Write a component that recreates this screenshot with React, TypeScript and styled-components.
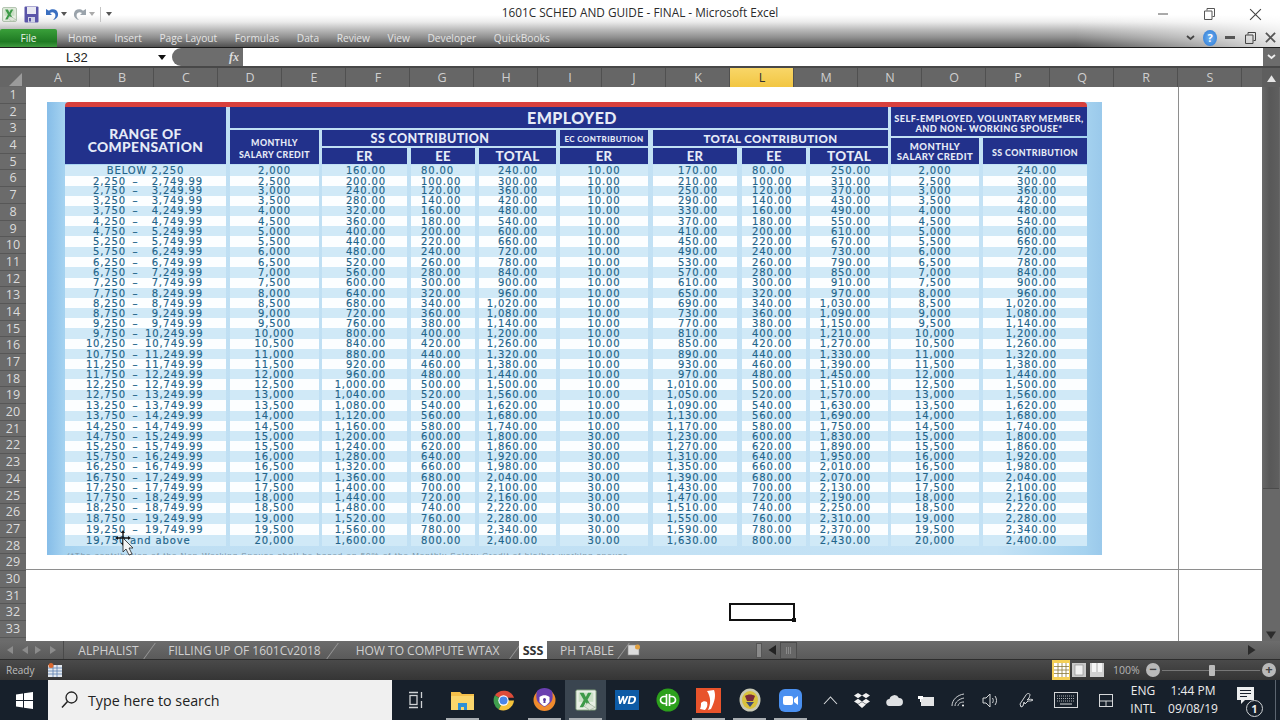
import React from "react";
import styled, { createGlobalStyle } from "styled-components";

const UI_FONT = `"Open Sans", "Noto Sans", sans-serif`;
const COLUMNS = ["A","B","C","D","E","F","G","H","I","J","K","L","M","N","O","P","Q","R","S"];
const RIBBON_TABS = ["Home","Insert","Page Layout","Formulas","Data","Review","View","Developer","QuickBooks"];
const SHEETS = [
  { name: "ALPHALIST", width: 89 },
  { name: "FILLING UP OF 1601Cv2018", width: 183 },
  { name: "HOW TO COMPUTE WTAX", width: 183 },
  { name: "SSS", width: 28, active: true },
  { name: "PH TABLE", width: 80 },
];

// text centres of the table rows as they sit in the scanned picture
const ROW_CENTERS = [171,181,191,200,211,221,231,241,252,262,272,283,293,303,313,323,333,344,354,364,374,384,395,405,416,426,436,446,456,467,477,487,497,508,518,529,540];

const money = (n: number) =>
  n.toLocaleString("en-US", { minimumFractionDigits: 2, maximumFractionDigits: 2 });
const whole = (n: number) => n.toLocaleString("en-US");

const TABLE = ROW_CENTERS.map((center, i) => {
  const prev = i === 0 ? 165 : (ROW_CENTERS[i - 1] + center) / 2;
  const next = i === ROW_CENTERS.length - 1 ? 546 : (ROW_CENTERS[i + 1] + center) / 2;
  const msc = 2000 + 500 * i;
  const er = 160 + 40 * i;
  const ee = er / 2;
  const ec = msc >= 15000 ? 30 : 10;
  const low = 2250 + 500 * (i - 1);
  return { i, height: next - prev, msc, er, ee, ec, low, high: low + 499.99 };
});

const GlobalStyle = createGlobalStyle`
  html, body { margin: 0; padding: 0; background: #16202b; }
  * { box-sizing: border-box; }
`;

const Screen = styled.div`
  width: 1280px;
  height: 720px;
  overflow: hidden;
  display: flex;
  flex-direction: column;
  font-family: ${UI_FONT};
`;

const Top = styled.div`
  height: 48px;
  flex: none;
  border-bottom: 1px solid #1c1c1c;
  background:
    linear-gradient(to right, rgba(255,255,255,0) 84%, rgba(255,255,255,.82) 100%),
    linear-gradient(to bottom, #fff 0, #fff 15px, #ebebeb 22px, #b8b8b8 30px, #8c8c8c 38px, #505050 47px);
`;

const TitleBar = styled.div`
  height: 28px;
  display: flex;
  align-items: center;
  padding-left: 1px;
  position: relative;
`;

const QuickIcon = styled.span<{ $w: number }>`
  width: ${(p) => p.$w}px;
  display: flex;
  justify-content: center;
  align-items: center;
  flex: none;
`;

const QuickSep = styled.span`
  width: 1px;
  height: 15px;
  margin: 0 3px;
  background: #c4c4c4;
  flex: none;
`;

const Title = styled.div`
  position: absolute;
  left: 0;
  right: 0;
  top: 4px;
  text-align: center;
  font-size: 11.8px;
  line-height: 17px;
  color: #2a2a2a;
`;

const WindowButtons = styled.div`
  margin-left: auto;
  display: flex;
  align-items: center;
  padding-right: 2px;
  position: relative;
`;

const WindowButton = styled.span`
  width: 46px;
  display: flex;
  justify-content: center;
`;

const RibbonTabs = styled.div`
  height: 19px;
  display: flex;
  align-items: center;
  position: relative;
`;

const FileTab = styled.div`
  width: 57px;
  height: 18px;
  margin: 1px 11px 0 0;
  background: linear-gradient(#3aa03a, #1f7a23 70%, #3f9a3f);
  color: #e8f3e8;
  font-size: 10.2px;
  display: flex;
  align-items: center;
  justify-content: center;
  border-radius: 2px 2px 0 0;
`;

const RibbonTab = styled.span`
  font-size: 10.2px;
  color: #e4e4e4;
  margin-right: 17.6px;
  white-space: nowrap;
`;

const RibbonButtons = styled.div`
  margin-left: auto;
  display: flex;
  align-items: center;
`;

const RibbonButton = styled.span`
  width: 20px;
  display: flex;
  justify-content: center;
`;

const HelpBadge = styled.span`
  width: 14px;
  height: 16px;
  border-radius: 50%;
  background: radial-gradient(#6fb1f0, #2a77d4);
  color: #fff;
  font-size: 11px;
  font-weight: 700;
  line-height: 16px;
  text-align: center;
`;

const FormulaBar = styled.div`
  height: 18px;
  flex: none;
  background: #fff;
  display: flex;
  align-items: stretch;
`;

const NameBox = styled.div`
  width: 172px;
  display: flex;
  align-items: center;
  position: relative;
  padding-left: 66px;
  font-family: "Liberation Sans", sans-serif;
  font-size: 13px;
  color: #222;
`;

const NameArrow = styled.span`
  position: absolute;
  left: 158px;
  top: 7px;
  border: 4px solid transparent;
  border-top: 5px solid #111;
  border-bottom: 0;
`;

const FxPill = styled.div`
  width: 71px;
  background: #6d6d6d;
  border-radius: 9px 0 0 9px;
  display: flex;
  align-items: center;
  justify-content: flex-end;
  padding-right: 4px;
  color: #ddd;
  font-family: "Liberation Serif", serif;
  font-style: italic;
  font-weight: 700;
  font-size: 12px;
`;

const FormulaInput = styled.div`
  flex: 1;
`;

const FormulaExpand = styled.div`
  width: 17px;
  background: #6c6c6c;
  color: #eee;
  display: flex;
  align-items: center;
  justify-content: center;
`;

const ColumnBar = styled.div`
  height: 21px;
  flex: none;
  display: flex;
  background: #666;
  border-top: 2px solid #484848;
`;

const Corner = styled.div`
  width: 26px;
  flex: none;
  display: flex;
  align-items: flex-end;
  justify-content: flex-end;
  padding: 0 4px 1px 0;
`;

const ColumnHead = styled.div<{ $on?: boolean }>`
  width: 64px;
  flex: none;
  padding-left: 1px;
  text-align: center;
  font-size: 12.5px;
  line-height: 19px;
  color: ${(p) => (p.$on ? "#333" : "#cfcfcf")};
  background: ${(p) => (p.$on ? "linear-gradient(#f8d668, #f2c642)" : "none")};
  border-right: 1px solid #505050;
`;

const ColumnRest = styled.div`
  flex: 1;
`;

const ArrowCell = styled.div`
  width: 18px;
  flex: none;
  display: flex;
  align-items: center;
  justify-content: center;
  background: #5e5e5e;
`;

const Body = styled.div`
  flex: 1;
  min-height: 0;
  display: flex;
`;

const RowHeads = styled.div`
  width: 26px;
  flex: none;
  background: #6b6b6b;
  overflow: hidden;
`;

const RowHead = styled.div`
  height: 16.69px;
  line-height: 16px;
  text-align: center;
  font-size: 12.5px;
  color: #dcdcdc;
  border-bottom: 1px solid #575757;
`;

const Sheet = styled.div`
  flex: 1;
  position: relative;
  background: #fff;
  overflow: hidden;
`;

const PageLineV = styled.div`
  position: absolute;
  left: 1152px;
  top: 0;
  bottom: 0;
  width: 1px;
  background: #8e8e8e;
`;

const PageLineH = styled.div`
  position: absolute;
  left: 0;
  right: 0;
  top: 482px;
  height: 1px;
  background: #8e8e8e;
`;

const SelectedCell = styled.div`
  position: absolute;
  left: 703px;
  top: 516px;
  width: 66px;
  height: 18px;
  border: 2px solid #111;
  &::after {
    content: "";
    position: absolute;
    right: -3px;
    bottom: -3px;
    width: 4px;
    height: 4px;
    background: #111;
  }
`;

const Picture = styled.div`
  position: absolute;
  left: 21px;
  top: 15px;
  width: 1055px;
  height: 453px;
  padding-left: 18px;
  overflow: hidden;
  background: linear-gradient(to right, #86bde8 0, #a4d2f0 1.6%, #bfdff3 8%, #c4e2f5 90%, #a5d2ef 98.4%, #9ac9eb 100%);
`;

const RedStrip = styled.div`
  width: 1022px;
  height: 5px;
  background: #d8403c;
  border-radius: 4px 4px 0 0;
`;

const HeadRow = styled.div`
  display: flex;
  width: 1022px;
  height: 57px;
  margin-bottom: 1px;
`;

const Navy = styled.div<{ $w?: number; $h?: number; $mr?: number; $size?: number; $pt?: number; $pl?: number; $pr?: number; $lh?: number }>`
  ${(p) => (p.$w ? `width: ${p.$w}px;` : "")}
  ${(p) => (p.$h ? `height: ${p.$h}px;` : "")}
  margin-right: ${(p) => p.$mr ?? 0}px;
  padding: ${(p) => p.$pt ?? 1}px ${(p) => p.$pr ?? 0}px 0 ${(p) => p.$pl ?? 0}px;
  flex: none;
  background: #22318b;
  color: #e6ebf7;
  font-family: Lato, sans-serif;
  font-weight: 900;
  font-size: ${(p) => p.$size ?? 12}px;
  line-height: ${(p) => p.$lh ?? 1.02};
  letter-spacing: 0.4px;
  text-align: center;
  display: flex;
  align-items: center;
  justify-content: center;
  white-space: pre-line;
`;

const HeadGroup = styled.div<{ $w: number; $mr?: number }>`
  width: ${(p) => p.$w}px;
  margin-right: ${(p) => p.$mr ?? 0}px;
  flex: none;
  display: flex;
  flex-direction: column;
  justify-content: space-between;
`;

const HeadLine = styled.div`
  display: flex;
`;

const DataRow = styled.div<{ $h: number }>`
  display: flex;
  width: 1022px;
  height: ${(p) => p.$h}px;
  font-family: "DejaVu Sans", sans-serif;
  font-size: 10px;
  letter-spacing: 0.85px;
  color: #22648a;
  -webkit-text-stroke: 0.15px #22648a;
`;

const DataCell = styled.div<{ $w: number; $mr?: number; $align?: string; $pad?: number; $alt: boolean }>`
  width: ${(p) => p.$w}px;
  margin-right: ${(p) => p.$mr ?? 0}px;
  flex: none;
  display: flex;
  align-items: center;
  white-space: nowrap;
  justify-content: ${(p) => p.$align ?? "center"};
  ${(p) => (p.$align === "flex-end" ? `padding-right: ${p.$pad}px;` : "")}
  ${(p) => (p.$align === "flex-start" ? `padding-left: ${p.$pad}px;` : "")}
  background: ${(p) => (p.$alt ? "#fcfeff" : "#d0e9f7")};
`;

const RangeParts = styled.div`
  display: grid;
  grid-template-columns: 61px 19px 58px;
  width: 138px;
  margin-right: auto;
`;

const RangePart = styled.span<{ $center?: boolean }>`
  text-align: ${(p) => (p.$center ? "center" : "right")};
`;

const RangeWhole = styled.span`
  grid-column: 1 / -1;
  padding-left: 21px;
`;

const Footnote = styled.div`
  margin-top: 5px;
  width: 580px;
  padding-left: 2px;
  font-family: "Liberation Sans", sans-serif;
  font-size: 8px;
  line-height: 10px;
  letter-spacing: 1px;
  color: #7b95a6;
  white-space: nowrap;
  overflow: hidden;
`;

const Cursor = styled.svg`
  position: absolute;
  left: 84px;
  top: 442px;
`;

const ScrollColumn = styled.div`
  width: 18px;
  flex: none;
  display: flex;
  flex-direction: column;
  background: #686868;
`;

const ScrollThumb = styled.div`
  height: 402px;
  flex: none;
  margin: 0 1px;
  background: linear-gradient(to right, #666, #585858 40%, #5f5f5f);
  border-bottom: 1px solid #4b4b4b;
`;

const ScrollEnd = styled.div`
  margin-top: auto;
  height: 14px;
  display: flex;
  justify-content: center;
  align-items: center;
`;

const TabBar = styled.div`
  height: 19px;
  flex: none;
  display: flex;
  align-items: center;
  background: linear-gradient(#6c6c6c, #5a5a5a);
  border-bottom: 1px solid #2d2d2d;
  color: #d0d0d0;
`;

const TabNav = styled.div`
  width: 64px;
  flex: none;
  height: 100%;
  display: flex;
  align-items: center;
  justify-content: space-around;
  padding: 0 2px;
  border-right: 1px solid #4a4a4a;
`;

const SheetTab = styled.div<{ $w: number; $on?: boolean }>`
  width: ${(p) => p.$w}px;
  flex: none;
  height: 100%;
  position: relative;
  display: flex;
  align-items: center;
  justify-content: center;
  font-size: 12px;
  white-space: nowrap;
  ${(p) => (p.$on ? "background: #fff; color: #333; font-weight: 700; font-size: 12.5px;" : "")}
  ${(p) =>
    p.$on
      ? ""
      : `&::after {
    content: "";
    position: absolute;
    right: 3px;
    top: 2px;
    width: 1px;
    height: 16px;
    background: #9a9a9a;
    transform: skewX(-36deg);
  }`}
`;

const NewSheet = styled.span`
  display: flex;
`;

const HScroll = styled.div`
  margin-left: auto;
  width: 524px;
  flex: none;
  display: flex;
  align-items: center;
  height: 100%;
`;

const Splitter = styled.span`
  width: 6px;
  height: 15px;
  background: #8a8a8a;
  border: 1px solid #555;
  flex: none;
`;

const ArrowBox = styled.span`
  width: 18px;
  display: flex;
  justify-content: center;
  flex: none;
`;

const HThumb = styled.span`
  width: 17px;
  height: 17px;
  background: #666;
  border: 1px solid #4c4c4c;
  flex: none;
  display: flex;
  align-items: center;
  justify-content: center;
`;

const HTrack = styled.span`
  flex: 1;
`;

const StatusBar = styled.div`
  height: 20px;
  flex: none;
  display: flex;
  align-items: center;
  background: linear-gradient(#4a4a4a, #353535);
  color: #bdbdbd;
  font-size: 10px;
  padding-left: 6px;
`;

const StatusIcon = styled.span`
  margin-left: 14px;
  display: flex;
`;

const StatusRight = styled.div`
  margin-left: auto;
  display: flex;
  align-items: center;
  height: 100%;
  padding-right: 4px;
`;

const ViewButton = styled.span<{ $on?: boolean; $w: number }>`
  width: ${(p) => p.$w}px;
  height: 100%;
  display: flex;
  align-items: center;
  justify-content: center;
  ${(p) => (p.$on ? "background: #f4cf56;" : "")}
`;

const Zoom = styled.span`
  width: 40px;
  padding-left: 7px;
  font-size: 10.5px;
  color: #b5b5b5;
`;

const ZoomRound = styled.span`
  width: 14px;
  height: 14px;
  border-radius: 50%;
  background: #b9b9b9;
  color: #444;
  font-size: 13px;
  font-weight: 700;
  line-height: 13px;
  text-align: center;
  flex: none;
`;

const ZoomTrack = styled.span`
  width: 98px;
  height: 1px;
  margin: 0 2px;
  background: #777;
  position: relative;
  flex: none;
  &::after {
    content: "";
    position: absolute;
    left: 47px;
    top: -5px;
    width: 6px;
    height: 11px;
    background: #bbb;
    border-radius: 1px;
  }
`;

const Taskbar = styled.div`
  height: 40px;
  flex: none;
  display: flex;
  align-items: center;
  background: #17202b;
  color: #ececec;
`;

const StartButton = styled.div`
  width: 48px;
  display: flex;
  justify-content: center;
  flex: none;
`;

const SearchBox = styled.div`
  width: 344px;
  height: 40px;
  flex: none;
  background: #f0f0f0;
  display: flex;
  align-items: center;
  padding-left: 13px;
  color: #222;
  font-size: 14.3px;
  gap: 10px;
`;

const AppSlot = styled.div<{ $w?: number; $on?: boolean; $run?: boolean }>`
  width: ${(p) => p.$w ?? 41}px;
  height: 40px;
  flex: none;
  display: flex;
  align-items: center;
  justify-content: center;
  position: relative;
  ${(p) => (p.$on ? "background: #3a4550;" : "")}
  ${(p) =>
    p.$run
      ? `&::after {
    content: "";
    position: absolute;
    left: 4px;
    right: 4px;
    bottom: 0;
    height: 2px;
    background: #a9aeb2;
  }`
      : ""}
`;

const TwoLine = styled.div<{ $w: number }>`
  width: ${(p) => p.$w}px;
  flex: none;
  text-align: center;
  font-size: 12px;
  line-height: 18px;
  white-space: nowrap;
`;

const DesktopEdge = styled.div`
  flex: 1;
  height: 100%;
  position: relative;
  &::after {
    content: "";
    position: absolute;
    left: 7px;
    top: 0;
    bottom: 0;
    width: 1px;
    background: #5c6570;
  }
`;

const NoteSvg = styled.svg`
  margin: 0 0 8px -3px;
`;

const NoteBadge = styled.span`
  position: absolute;
  left: 20px;
  top: 20px;
  width: 17px;
  height: 17px;
  border: 1px solid #cfd2d5;
  border-radius: 50%;
  background: #17202b;
  font-size: 11px;
  font-weight: 700;
  line-height: 15px;
  text-align: center;
`;

const UndoSvg = styled.svg<{ $flip?: boolean }>`
  ${(p) => (p.$flip ? "transform: scaleX(-1);" : "")}
`;

const ExcelIcon = ({ size = 15 }: { size?: number }) => (
  <svg width={size} height={size} viewBox="0 0 24 24">
    <rect x="1" y="1" width="22" height="22" rx="1.5" fill="#e8efe4" stroke="#7d9a78" />
    <path d="M4 4h16v10H4z" fill="#c9dfc4" />
    <path d="M5 4l4.5 8L5 20h4l2.8-5.6L14.5 20h4.2l-5-8.4L18 4h-3.8l-2.4 4.8L9.400 4z" fill="#3d9a48" />
    <path d="M14 15l8 5-6 3-6-4z" fill="#dfe6da" stroke="#8aa487" strokeWidth=".6" />
  </svg>
);

const SaveIcon = () => (
  <svg width="15" height="17" viewBox="0 0 15 17">
    <rect x="0.500" y="0.500" width="14" height="16" rx="1" fill="#5a55a8" />
    <rect x="3" y="1" width="9" height="7" fill="#e8e8f2" />
    <rect x="4" y="11" width="7" height="5.500" fill="#cfd2e6" />
    <rect x="5" y="12" width="2" height="3.500" fill="#5a55a8" />
  </svg>
);

const UndoIcon = ({ flip, color }: { flip?: boolean; color: string }) => (
  <UndoSvg $flip={flip} width="14" height="15" viewBox="0 0 14 15">
    <path d="M1 2v6h6L5 6c2-1.500 5-.8 5.400 2 .3 2-1 3.600-2.400 5 3-.8 5.500-3 5-6.500C12.500 2.500 7.500 1 4 3.800z" fill={color} />
  </UndoSvg>
);

const TinyDown = ({ color = "#777" }: { color?: string }) => (
  <svg width="6" height="4" viewBox="0 0 6 4"><path d="M0 0h6L3 4z" fill={color} /></svg>
);

const Triangle = ({ dir, color, size = 8 }: { dir: "up" | "down" | "left" | "right"; color: string; size?: number }) => {
  const d = { up: "M0 8L4 2l4 6z", down: "M0 2h8L4 8z", left: "M8 0v8L2 4z", right: "M0 0v8l6-4z" }[dir];
  return <svg width={size} height={size} viewBox="0 0 8 8"><path d={d} fill={color} /></svg>;
};

const CloseGlyph = ({ size = 13, color = "#444", w = 1 }: { size?: number; color?: string; w?: number }) => (
  <svg width={size} height={size} viewBox="0 0 12 12"><path d="M1 1l10 10M11 1L1 11" stroke={color} strokeWidth={w} fill="none" /></svg>
);

const RestoreGlyph = ({ color = "#444" }: { color?: string }) => (
  <svg width="11" height="12" viewBox="0 0 11 12">
    <path d="M3 2.500V.500h7.500v8H8.500M.500 3h7.500v8.500H.500z" fill="none" stroke={color} />
  </svg>
);

const WinLogo = () => (
  <svg width="17" height="17" viewBox="0 0 17 17">
    <path d="M0 2.400l7-1v6.600H0zM8 1.300L17 0v8H8zM0 9h7v6.600l-7-1zM8 9h9v8l-9-1.300z" fill="#fff" />
  </svg>
);

const SearchGlyph = () => (
  <svg width="17" height="18" viewBox="0 0 17 18">
    <circle cx="10.500" cy="6.500" r="5.500" fill="none" stroke="#222" strokeWidth="1.300" />
    <path d="M6.500 10.500L1 16.500" stroke="#222" strokeWidth="1.500" />
  </svg>
);

const TaskView = () => (
  <svg width="14" height="18" viewBox="0 0 14 18" fill="none" stroke="#cfd2d5" strokeWidth="1.300">
    <path d="M0 1.500h9M0 16.500h9" />
    <rect x="1" y="4.500" width="7" height="9" />
    <path d="M12.500 1v6M12.500 10v7" />
  </svg>
);

const FolderIcon = () => (
  <svg width="23" height="22" viewBox="0 0 23 22">
    <path d="M0 3h9l2 2h12v16H0z" fill="#f5c04a" />
    <path d="M0 7h23v14H0z" fill="#fbd66c" />
    <path d="M7 14h9v7h-3v-3h-3v3H7z" fill="#2d8fd6" />
  </svg>
);

const ChromeIcon = () => (
  <svg width="23" height="23" viewBox="0 0 24 24">
    <path d="M12 12L3 6.500A11.500 11.500 0 0 1 23 9H12z" fill="#dd4b39" />
    <path d="M12 12l-5 9.500A11.500 11.500 0 0 1 3 6.500z" fill="#3f9e4d" />
    <path d="M12 12h11a11.500 11.500 0 0 1-16 9.500z" fill="#f5c33b" />
    <circle cx="12" cy="12" r="5.400" fill="#fff" />
    <circle cx="12" cy="12" r="4.200" fill="#4a85e8" />
  </svg>
);

const ShieldIcon = () => (
  <svg width="23" height="24" viewBox="0 0 23 24">
    <circle cx="11.500" cy="12" r="11" fill="#ef8b2d" />
    <path d="M4 3c4-4 11-4 15 0 1 4 1 8-1 11-2 2-4 3.500-6.500 5-2.500-1.500-4.500-3-6.500-5-2-3-2-7-1-11z" fill="#6a3fb0" />
    <path d="M6.500 9c3-2.500 7-2.500 10 0v5c-1.500 2-3 3.200-5 4.200-2-1-3.500-2.200-5-4.200z" fill="#fff" />
    <circle cx="11.500" cy="11.500" r="1.500" fill="#5a3a9e" />
    <path d="M10.800 12h1.400l.4 3h-2.200z" fill="#5a3a9e" />
  </svg>
);

const WdIcon = () => (
  <svg width="24" height="20" viewBox="0 0 24 20">
    <rect width="24" height="20" fill="#0d5ba6" />
    <path d="M3 6h2l.3 5L7.500 6h1.600l.3 5L11.600 6h1.900L10 14H8.300l-.3-4.800L5.800 14H4.200z" fill="#fff" />
    <path d="M14.200 6h3.800c2.600 0 3.400 1.600 3 3.800-.4 2.600-2.100 4.200-4.900 4.200h-3.500zm1.500 1.600l-1 4.800h1.500c1.500 0 2.500-1 2.800-2.700.2-1.400-.2-2.100-1.500-2.100z" fill="#fff" />
  </svg>
);

const QbIcon = () => (
  <svg width="24" height="24" viewBox="0 0 24 24">
    <circle cx="12" cy="12" r="11.500" fill="#2ca01c" />
    <path d="M10.500 6v12M10.500 8.500H8a3.500 3.500 0 0 0 0 7h2.500M13.500 18V6M13.500 8.500H16a3.500 3.500 0 0 1 0 7h-2.500" fill="none" stroke="#fff" strokeWidth="1.700" />
  </svg>
);

const RedIcon = () => (
  <svg width="25" height="25" viewBox="0 0 25 25">
    <rect width="25" height="25" fill="#e8532b" />
    <path d="M11 3l7-1c2 5 1 11-3 19l-3 1c3-6 3-13-1-19z" fill="#fff" />
    <path d="M5 15c2-2 4-2 6-1 1 3 0 6-2 8-2 0-3-1-5-1 1-2 1-4 1-6z" fill="#fff" />
  </svg>
);

const SealIcon = () => (
  <svg width="22" height="24" viewBox="0 0 22 24">
    <ellipse cx="11" cy="12" rx="10.500" ry="11.500" fill="#c9c9b4" />
    <ellipse cx="11" cy="12" rx="8" ry="9" fill="#d9c23c" />
    <path d="M6 8c3-2 7-2 10 0l-2 5H8z" fill="#7a2a3a" />
    <path d="M7 14h8l-4 5z" fill="#3c4a7a" />
  </svg>
);

const ZoomIcon = () => (
  <svg width="23" height="23" viewBox="0 0 23 23">
    <rect width="23" height="23" rx="6" fill="#4a90f0" />
    <rect x="4" y="7" width="10" height="9" rx="2" fill="#fff" />
    <path d="M15 10l4-3v9l-4-3z" fill="#fff" />
  </svg>
);

const Tray = {
  chevron: <svg width="15" height="9" viewBox="0 0 15 9"><path d="M1 8l6.500-7L14 8" fill="none" stroke="#d8dadc" strokeWidth="1.100" /></svg>,
  dropbox: (
    <svg width="16" height="15" viewBox="0 0 16 15">
      <path d="M4 0l4 2.600L4 5.200 0 2.600zM12 0l4 2.600-4 2.600-4-2.600zM4 5.800l4 2.600-4 2.600-4-2.600zM12 5.800l4 2.600-4 2.600-4-2.600zM4 11.500l4-2.400 4 2.400L8 15z" fill="#f2f2f2" />
    </svg>
  ),
  cloud: <svg width="17" height="11" viewBox="0 0 17 11"><path d="M4 11a3.500 3.500 0 0 1-.5-7 5 5 0 0 1 9.400-1A4 4 0 0 1 13 11z" fill="#dfe1e3" /></svg>,
  plug: (
    <svg width="16" height="12" viewBox="0 0 16 12">
      <rect x="3" y="3" width="13" height="9" fill="#e3e4e5" />
      <path d="M1 0v2M4 0v2M0 2h5v3H3v3H2V5H0z" fill="#fff" />
    </svg>
  ),
  wifi: (
    <svg width="14" height="14" viewBox="0 0 14 14" fill="none" stroke="#cfd2d5" strokeWidth="1">
      <path d="M1 13C1 7 6 2 13 1M4 13c0-4 4-7 9-8M7 13c0-2 2-4 6-4" />
      <circle cx="12" cy="12.500" r="1" fill="#fff" stroke="none" />
    </svg>
  ),
  volume: (
    <svg width="17" height="15" viewBox="0 0 17 15" fill="none" stroke="#d5d7d9" strokeWidth="1">
      <path d="M1 5h3l4-4v13l-4-4H1zM10.500 5c1 1.500 1 3.500 0 5M13 3c2 2.500 2 6.500 0 9" />
    </svg>
  ),
  pen: (
    <svg width="15" height="17" viewBox="0 0 15 17" fill="none" stroke="#d5d7d9" strokeWidth="1">
      <path d="M2 15l-1-3 6-9c1-2 4-2 4 0 0 1-1 2-1 3l-2 2c2-1 5-1 6 0-1 1-3 1-5 1l-3 3-1-2-1 4z" />
    </svg>
  ),
  keyboard: (
    <svg width="24" height="16" viewBox="0 0 24 16">
      <rect x=".5" y=".5" width="23" height="15" fill="none" stroke="#d5d7d9" />
      <path d="M3 4h18M3 6.500h18M3 9h18" stroke="#aeb1b4" strokeDasharray="1 1" />
      <path d="M6 12h12" stroke="#d5d7d9" />
    </svg>
  ),
  tablet: (
    <svg width="14" height="13" viewBox="0 0 14 13" fill="none" stroke="#d5d7d9">
      <rect x=".5" y=".5" width="13" height="12" />
      <path d="M.5 7h13M7 7v5.500" />
    </svg>
  ),
  note: (
    <NoteSvg width="18" height="18" viewBox="0 0 18 18">
      <path d="M0 0h17v13H8l-4 4v-4H0z" fill="#eceeef" />
      <path d="M3 3.500h11M3 6.500h11M3 9.500h7" stroke="#17202b" />
    </NoteSvg>
  ),
};

const GridGlyph = () => (
  <svg width="15" height="14" viewBox="0 0 15 14">
    <rect width="15" height="14" fill="#fff" />
    <path d="M0 3.500h15M0 7h15M0 10.500h15M4 0v14M8 0v14M12 0v14" stroke="#8b7a3a" strokeWidth=".8" />
  </svg>
);

const PageGlyph = () => (
  <svg width="14" height="14" viewBox="0 0 14 14">
    <rect width="14" height="14" fill="#c9c9c9" />
    <rect x="3" y="2" width="8" height="10" fill="#f0f0f0" stroke="#888" strokeWidth=".6" />
  </svg>
);

const BreakGlyph = () => (
  <svg width="14" height="14" viewBox="0 0 14 14">
    <rect width="14" height="14" fill="#d0d0d0" />
    <path d="M2 0h4v9H2zM8 0h4v9H8z" fill="#f5f5f5" />
  </svg>
);

const TableHead = () => (
  <HeadRow>
    <Navy $w={161} $mr={4} $size={13.8} $pt={9} $lh={0.95}>{"RANGE OF\nCOMPENSATION"}</Navy>
    <HeadGroup $w={658} $mr={3}>
      <Navy $h={21} $size={16} $pl={26}>EMPLOYED</Navy>
      <HeadLine>
        <Navy $w={89} $h={34} $mr={3} $size={8.8} $pt={3} $lh={1.35}>{"MONTHLY\nSALARY CREDIT"}</Navy>
        <HeadGroup $w={234} $mr={4}>
          <Navy $h={16} $size={12.5} $pr={18} $pt={2}>SS CONTRIBUTION</Navy>
          <HeadLine>
            <Navy $w={85} $h={16} $mr={4} $size={13} $pt={2}>ER</Navy>
            <Navy $w={64} $h={16} $mr={4} $size={13} $pt={2}>EE</Navy>
            <Navy $w={77} $h={16} $size={13.5} $pt={2}>TOTAL</Navy>
          </HeadLine>
        </HeadGroup>
        <HeadGroup $w={88} $mr={5}>
          <Navy $h={16} $size={8} $pt={2}>EC CONTRIBUTION</Navy>
          <Navy $h={16} $size={13} $pt={2}>ER</Navy>
        </HeadGroup>
        <HeadGroup $w={235}>
          <Navy $h={16} $size={11.5} $pt={2}>TOTAL CONTRIBUTION</Navy>
          <HeadLine>
            <Navy $w={84} $h={16} $mr={5} $size={13} $pt={2}>ER</Navy>
            <Navy $w={64} $h={16} $mr={4} $size={13} $pt={2}>EE</Navy>
            <Navy $w={78} $h={16} $size={13.5} $pt={2}>TOTAL</Navy>
          </HeadLine>
        </HeadGroup>
      </HeadLine>
    </HeadGroup>
    <HeadGroup $w={196}>
      <Navy $h={29} $size={9.2} $pt={4}>{"SELF-EMPLOYED, VOLUNTARY MEMBER,\nAND NON- WORKING SPOUSE*"}</Navy>
      <HeadLine>
        <Navy $w={88} $h={26} $mr={4} $size={9.5} $pt={2}>{"MONTHLY\nSALARY CREDIT"}</Navy>
        <Navy $w={104} $h={26} $size={8.9} $pt={3}>SS CONTRIBUTION</Navy>
      </HeadLine>
    </HeadGroup>
  </HeadRow>
);

const TableBody = () => (
  <>
    {TABLE.map((r) => {
      const alt = r.i % 2 === 1;
      return (
        <DataRow key={r.i} $h={r.height}>
          <DataCell $w={161} $mr={4} $alt={alt}>
            {r.i === 0 ? (
              "BELOW 2,250"
            ) : r.i === 36 ? (
              <RangeParts>
                <RangeWhole>19,750 and above</RangeWhole>
              </RangeParts>
            ) : (
              <RangeParts>
                <RangePart>{whole(r.low)}</RangePart>
                <RangePart $center>–</RangePart>
                <RangePart>{money(r.high)}</RangePart>
              </RangeParts>
            )}
          </DataCell>
          <DataCell $w={89} $mr={3} $alt={alt}>{whole(r.msc)}</DataCell>
          <DataCell $w={85} $mr={4} $alt={alt} $align="flex-end" $pad={21}>{money(r.er)}</DataCell>
          <DataCell $w={64} $mr={4} $alt={alt} $align="flex-start" $pad={10}>{money(r.ee)}</DataCell>
          <DataCell $w={77} $mr={4} $alt={alt} $align="flex-end" $pad={18}>{money(r.er + r.ee)}</DataCell>
          <DataCell $w={88} $mr={5} $alt={alt}>{money(r.ec)}</DataCell>
          <DataCell $w={84} $mr={5} $alt={alt} $align="flex-end" $pad={19}>{money(r.er + r.ec)}</DataCell>
          <DataCell $w={64} $mr={4} $alt={alt} $align="flex-start" $pad={10}>{money(r.ee)}</DataCell>
          <DataCell $w={78} $mr={3} $alt={alt} $align="flex-end" $pad={17}>{money(r.er + r.ee + r.ec)}</DataCell>
          <DataCell $w={88} $mr={4} $alt={alt}>{whole(r.msc)}</DataCell>
          <DataCell $w={104} $alt={alt} $align="flex-end" $pad={30}>{money(r.er + r.ee)}</DataCell>
        </DataRow>
      );
    })}
  </>
);

export default function App() {
  return (
    <Screen>
      <GlobalStyle />
      <Top>
        <TitleBar>
          <QuickIcon $w={16}><ExcelIcon /></QuickIcon>
          <QuickIcon $w={6} />
          <QuickIcon $w={16}><SaveIcon /></QuickIcon>
          <QuickIcon $w={6} />
          <QuickIcon $w={14}><UndoIcon color="#3a6fc0" /></QuickIcon>
          <QuickIcon $w={10}><TinyDown color="#555" /></QuickIcon>
          <QuickIcon $w={4} />
          <QuickIcon $w={14}><UndoIcon flip color="#9aa3ab" /></QuickIcon>
          <QuickIcon $w={10}><TinyDown color="#aaa" /></QuickIcon>
          <QuickSep />
          <QuickIcon $w={9}><TinyDown color="#555" /></QuickIcon>
          <Title>1601C SCHED AND GUIDE - FINAL - Microsoft Excel</Title>
          <WindowButtons>
            <WindowButton><svg width="10" height="4" viewBox="0 0 10 4"><path d="M0 2h10" stroke="#555" /></svg></WindowButton>
            <WindowButton><RestoreGlyph color="#555" /></WindowButton>
            <WindowButton><CloseGlyph color="#444" /></WindowButton>
          </WindowButtons>
        </TitleBar>
        <RibbonTabs>
          <FileTab>File</FileTab>
          {RIBBON_TABS.map((t) => <RibbonTab key={t}>{t}</RibbonTab>)}
          <RibbonButtons>
            <RibbonButton><svg width="9" height="6" viewBox="0 0 9 6"><path d="M1 1l3.500 3L8 1" fill="none" stroke="#444" strokeWidth="1.800" /></svg></RibbonButton>
            <RibbonButton><HelpBadge>?</HelpBadge></RibbonButton>
            <RibbonButton><svg width="10" height="4" viewBox="0 0 10 4"><rect width="10" height="3" fill="#555" /></svg></RibbonButton>
            <RibbonButton><RestoreGlyph color="#444" /></RibbonButton>
            <RibbonButton><CloseGlyph size={11} color="#555" w={2} /></RibbonButton>
          </RibbonButtons>
        </RibbonTabs>
      </Top>
      <FormulaBar>
        <NameBox>L32<NameArrow /></NameBox>
        <FxPill>fx</FxPill>
        <FormulaInput />
        <FormulaExpand><svg width="9" height="6" viewBox="0 0 9 6"><path d="M1 1l3.500 3L8 1" fill="none" stroke="#eee" strokeWidth="1.800" /></svg></FormulaExpand>
      </FormulaBar>
      <ColumnBar>
        <Corner><svg width="13" height="13" viewBox="0 0 13 13"><path d="M13 0v13H0z" fill="#9b9b9b" /></svg></Corner>
        {COLUMNS.map((c) => <ColumnHead key={c} $on={c === "L"}>{c}</ColumnHead>)}
        <ColumnRest />
        <ArrowCell><Triangle dir="up" color="#e6e6e6" size={9} /></ArrowCell>
      </ColumnBar>
      <Body>
        <RowHeads>
          {Array.from({ length: 33 }, (_, i) => <RowHead key={i}>{i + 1}</RowHead>)}
        </RowHeads>
        <Sheet>
          <PageLineV />
          <PageLineH />
          <Picture>
            <RedStrip />
            <TableHead />
            <TableBody />
            <Footnote>(*The contribution of the Non-Working Spouse shall be based on 50% of the Monthly Salary Credit of his/her working spouse</Footnote>
          </Picture>
          <SelectedCell />
          <Cursor width="24" height="28" viewBox="0 0 24 28">
            <path d="M13 4v10M8 9h10" stroke="#111" strokeWidth="1.400" />
            <path d="M13 1l2 3h-4zM13 17l-2-3h4zM5 9l3-2v4zM21 9l-3-2v4z" fill="#111" />
            <path d="M13 9v14l3-3 3 6 3-1-3-6h4z" fill="#f4f4f4" stroke="#222" strokeWidth=".8" />
          </Cursor>
        </Sheet>
        <ScrollColumn>
          <ScrollThumb />
          <ScrollEnd><Triangle dir="down" color="#2c2c2c" size={10} /></ScrollEnd>
        </ScrollColumn>
      </Body>
      <TabBar>
        <TabNav>
          <Triangle dir="left" color="#8c8c8c" />
          <Triangle dir="left" color="#8c8c8c" />
          <Triangle dir="right" color="#8c8c8c" />
          <Triangle dir="right" color="#8c8c8c" />
        </TabNav>
        {SHEETS.map((s) => <SheetTab key={s.name} $w={s.width} $on={s.active}>{s.name}</SheetTab>)}
        <NewSheet>
          <svg width="14" height="12" viewBox="0 0 14 12">
            <rect x="1" y="1" width="11" height="10" fill="#dcdcdc" stroke="#8a8a8a" strokeWidth=".6" />
            <circle cx="10.500" cy="3" r="2.500" fill="#e0a040" />
          </svg>
        </NewSheet>
        <HScroll>
          <Splitter />
          <ArrowBox><Triangle dir="left" color="#222" size={10} /></ArrowBox>
          <HThumb><svg width="5" height="7" viewBox="0 0 5 7"><path d="M.5 0v7M2.500 0v7M4.500 0v7" stroke="#8a8a8a" /></svg></HThumb>
          <HTrack />
          <ArrowBox><Triangle dir="right" color="#2a2a2a" size={10} /></ArrowBox>
          <ArrowBox />
        </HScroll>
      </TabBar>
      <StatusBar>
        Ready
        <StatusIcon>
          <svg width="14" height="14" viewBox="0 0 14 14">
            <rect y="2" width="14" height="12" fill="#e4e9ef" />
            <path d="M0 5h14M0 8h14M0 11h14M5 2v12M9 2v12" stroke="#5a7fae" strokeWidth=".8" />
            <circle cx="3" cy="2.500" r="2.500" fill="#d9682f" />
          </svg>
        </StatusIcon>
        <StatusRight>
          <ViewButton $on $w={18}><GridGlyph /></ViewButton>
          <ViewButton $w={18}><PageGlyph /></ViewButton>
          <ViewButton $w={18}><BreakGlyph /></ViewButton>
          <Zoom>100%</Zoom>
          <ZoomRound>−</ZoomRound>
          <ZoomTrack />
          <ZoomRound>+</ZoomRound>
        </StatusRight>
      </StatusBar>
      <Taskbar>
        <StartButton><WinLogo /></StartButton>
        <SearchBox><SearchGlyph />Type here to search</SearchBox>
        <AppSlot $w={48}><TaskView /></AppSlot>
        <AppSlot $w={2} />
        <AppSlot $run><FolderIcon /></AppSlot>
        <AppSlot><ChromeIcon /></AppSlot>
        <AppSlot $run><ShieldIcon /></AppSlot>
        <AppSlot $on $run><ExcelIcon size={22} /></AppSlot>
        <AppSlot><WdIcon /></AppSlot>
        <AppSlot><QbIcon /></AppSlot>
        <AppSlot $run><RedIcon /></AppSlot>
        <AppSlot $run><SealIcon /></AppSlot>
        <AppSlot $run><ZoomIcon /></AppSlot>
        <AppSlot $w={3} />
        <AppSlot $w={32}>{Tray.chevron}</AppSlot>
        <AppSlot $w={32}>{Tray.dropbox}</AppSlot>
        <AppSlot $w={32}>{Tray.cloud}</AppSlot>
        <AppSlot $w={32}>{Tray.plug}</AppSlot>
        <AppSlot $w={32}>{Tray.wifi}</AppSlot>
        <AppSlot $w={32}>{Tray.volume}</AppSlot>
        <AppSlot $w={40}>{Tray.pen}</AppSlot>
        <AppSlot $w={40}>{Tray.keyboard}</AppSlot>
        <AppSlot $w={40}>{Tray.tablet}</AppSlot>
        <TwoLine $w={34}>ENG<br />INTL</TwoLine>
        <TwoLine $w={66}>1:44 PM<br />09/08/19</TwoLine>
        <AppSlot $w={42}>{Tray.note}<NoteBadge>1</NoteBadge></AppSlot>
        <DesktopEdge />
      </Taskbar>
    </Screen>
  );
}
